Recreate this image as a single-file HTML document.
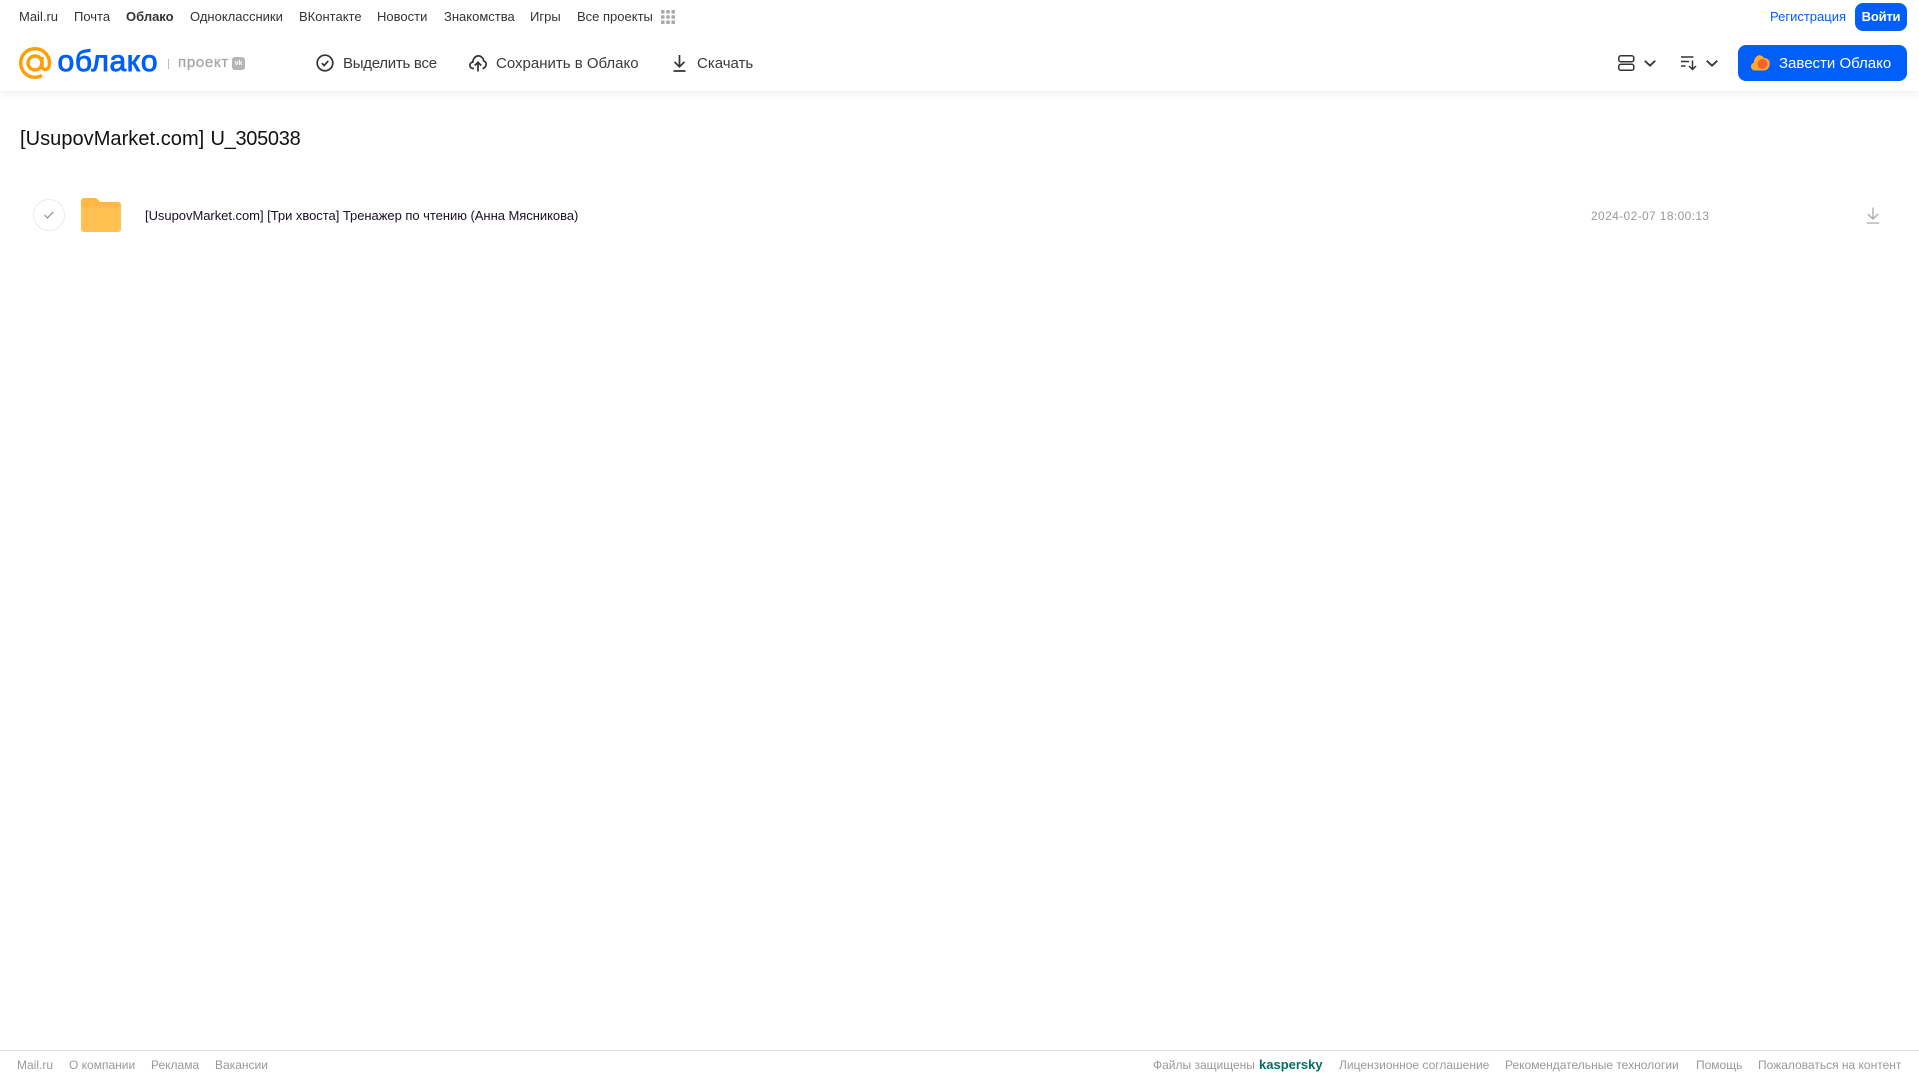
<!DOCTYPE html>
<html lang="ru"><head><meta charset="utf-8"><title>Облако</title>
<style>
html,body{margin:0;padding:0;background:#fff}
body{width:1919px;height:1079px;overflow:hidden;position:relative;font-family:"Liberation Sans",Arial,sans-serif}
.t{position:absolute;white-space:nowrap}
.n{top:8px;font-size:13px;line-height:17px;color:#333}
.a{top:54px;font-size:15px;line-height:20px;color:#3a3a3a}
.f{top:1057px;font-size:12px;line-height:16px;color:#999}
svg{position:absolute;overflow:visible}
</style></head><body>
<div style="position:absolute;left:0;top:0;width:1919px;height:91px;background:#fff;box-shadow:0 2px 8px rgba(0,0,0,.07)"></div>

<span class="t n" style="left:19px">Mail.ru</span>
<span class="t n" style="left:74px">Почта</span>
<span class="t n" style="left:126px;font-weight:bold">Облако</span>
<span class="t n" style="left:190px">Одноклассники</span>
<span class="t n" style="left:299px">ВКонтакте</span>
<span class="t n" style="left:377px">Новости</span>
<span class="t n" style="left:444px">Знакомства</span>
<span class="t n" style="left:530px">Игры</span>
<span class="t n" style="left:577px">Все проекты</span>
<svg style="left:661px;top:10px" width="14" height="14" fill="#aaa"><rect width="3.6" height="3.6" rx=".8"/><rect x="5.2" width="3.6" height="3.6" rx=".8"/><rect x="10.4" width="3.6" height="3.6" rx=".8"/><rect y="5.2" width="3.6" height="3.6" rx=".8"/><rect x="5.2" y="5.2" width="3.6" height="3.6" rx=".8"/><rect x="10.4" y="5.2" width="3.6" height="3.6" rx=".8"/><rect y="10.4" width="3.6" height="3.6" rx=".8"/><rect x="5.2" y="10.4" width="3.6" height="3.6" rx=".8"/><rect x="10.4" y="10.4" width="3.6" height="3.6" rx=".8"/></svg>

<svg style="left:19px;top:47px" width="33" height="33" fill="none" stroke="#ff9e00" stroke-width="3.4"><circle cx="16" cy="16" r="7"/><path d="M23 10v8.500c0 2.500 1.500 4 3.500 4s4-2 4-6.500C30.500 8 24 1.700 16 1.700S1.700 8 1.700 16 8 30.300 16 30.300c2.800 0 5-.6 7-1.800"/></svg>
<span class="t" style="left:57.500px;top:43px;font-size:30px;line-height:38px;color:#005ff9;-webkit-text-stroke:.9px #005ff9;letter-spacing:.65px">облако</span>
<div style="position:absolute;left:168px;top:59px;width:1px;height:10px;background:#bbb"></div>
<span class="t" style="left:178px;top:53px;font-size:15px;line-height:19px;color:#a5a5a5;-webkit-text-stroke:.3px #a5a5a5;letter-spacing:.7px">проект</span>
<div style="position:absolute;left:232px;top:57px;width:13px;height:13px;border-radius:3px;background:#b5b5b5;color:#fff;font:bold 7px/13px 'Liberation Sans',sans-serif;text-align:center">vk</div>

<svg style="left:316px;top:54px" width="18" height="18" fill="none" stroke="#333" stroke-width="1.700"><circle cx="9" cy="9" r="7.800"/><path d="M5.800 9.200l2.300 2.300 4.200-4.500"/></svg>
<span class="t a" style="left:343px;letter-spacing:-.27px">Выделить все</span>
<svg style="left:469px;top:54px" width="18" height="18" fill="none" stroke="#333" stroke-width="1.700"><path d="M5 14.500H4.200C2.200 14.500.9 13 .9 11.300c0-1.800 1.300-3 2.900-3.200C4 4.500 6.500 1.900 9.400 1.900c2.700 0 5 2.200 5.300 5 1.700.3 2.800 2 2.400 3.800-.3 1.600-1.600 3.800-3.600 3.800"/><path d="M9 17.500V8.500M5.800 11.500L9 8.300l3.200 3.200"/></svg>
<span class="t a" style="left:496px">Сохранить в Облако</span>
<svg style="left:672px;top:54px" width="15" height="18" fill="none" stroke="#333" stroke-width="1.700"><path d="M7.500 1v11.500M2.500 7.800l5 5 5-5M1.500 17h12"/></svg>
<span class="t a" style="left:697px">Скачать</span>

<span class="t n" style="left:1770px;color:#005ff9">Регистрация</span>
<div class="t" style="left:1855px;top:3px;width:52px;height:28px;border-radius:8px;background:#005ff9;color:#fff;font-size:13px;font-weight:bold;letter-spacing:-.2px;line-height:28px;text-align:center">Войти</div>

<svg style="left:1618px;top:55px" width="17" height="16" fill="none" stroke="#333" stroke-width="1.500"><rect x=".8" y=".8" width="15" height="5.900" rx="2"/><rect x=".8" y="9.300" width="15" height="5.900" rx="2"/></svg>
<svg style="left:1644px;top:60px" width="12" height="7" fill="none" stroke="#333" stroke-width="1.800"><path d="M.8 .8L6 5.600 11.200 .8"/></svg>
<svg style="left:1681px;top:56px" width="16" height="14" fill="none" stroke="#333" stroke-width="1.500"><path d="M0 1h12.500M0 5.500h8M0 10h4.500M11.500 4.500v9M8 10l3.500 3.500L15 10"/></svg>
<svg style="left:1706px;top:60px" width="12" height="7" fill="none" stroke="#333" stroke-width="1.800"><path d="M.8 .8L6 5.600 11.200 .8"/></svg>

<div style="position:absolute;left:1738px;top:45px;width:169px;height:36px;border-radius:8px;background:#005ff9"></div>
<svg style="left:1751px;top:55px" width="19" height="16"><path d="M4 15.500C1.800 15.500 0 13.800 0 11.500 0 9.700 1.200 8.200 2.800 7.700 3 3.500 5.500 .2 8.500 .2c2 0 3.700 1.200 4.500 3 3-.6 5.800 1.800 5.800 5.200 0 4-2.600 7.100-6 7.100z" fill="#ffa930"/><circle cx="11.500" cy="9" r="5" fill="#f4622a"/></svg>
<span class="t a" style="left:1779px;color:#fff">Завести Облако</span>

<span class="t" style="left:20px;top:126px;font-size:20px;line-height:26px;color:#111;letter-spacing:.05px">[UsupovMarket.com]</span>
<span class="t" style="left:210.500px;top:126px;font-size:20px;line-height:26px;color:#111;letter-spacing:-.3px">U_305038</span>

<div style="position:absolute;left:33px;top:199px;width:30px;height:30px;border:1px solid #ebebeb;border-radius:50%"></div>
<svg style="left:44px;top:211px" width="10" height="8" fill="none" stroke="#999" stroke-width="1.300"><path d="M.6 4l3 3L9.400 .8"/></svg>
<svg style="left:81px;top:198px" width="40" height="34"><path d="M0 3.500C0 1.500 1.500 0 3.500 0h10c1.500 0 2.500.5 3.500 1.800L19 4h18c1.700 0 3 1.300 3 3v7H0z" fill="#ffb845"/><path d="M0 9.500h40V31c0 1.700-1.300 3-3 3H3c-1.700 0-3-1.300-3-3z" fill="#ffc252"/></svg>
<span class="t" style="left:145px;top:207px;font-size:13px;line-height:17px;color:#1c1023;letter-spacing:-.036px">[UsupovMarket.com] [Три хвоста] Тренажер по чтению (Анна Мясникова)</span>
<span class="t" style="left:1591px;top:208px;font-size:12px;line-height:17px;color:#999;letter-spacing:.37px">2024-02-07 18:00:13</span>
<svg style="left:1866px;top:207px" width="14" height="17" fill="none" stroke="#aaa" stroke-width="1.300"><path d="M7 .5v11.500M1.800 7L7 12l5.200-5M.8 16h12.400"/></svg>

<div style="position:absolute;left:0;top:1050px;width:1919px;height:1px;background:#ddd"></div>
<span class="t f" style="left:17px">Mail.ru</span>
<span class="t f" style="left:69px">О компании</span>
<span class="t f" style="left:151px">Реклама</span>
<span class="t f" style="left:215px">Вакансии</span>
<span class="t f" style="left:1153px">Файлы защищены</span>
<span class="t f" style="left:1259px;font-size:13px;font-weight:bold;color:#00725f">kaspersky</span>
<span class="t f" style="left:1339px">Лицензионное соглашение</span>
<span class="t f" style="left:1505px">Рекомендательные технологии</span>
<span class="t f" style="left:1696px">Помощь</span>
<span class="t f" style="left:1758px">Пожаловаться на контент</span>
</body></html>
